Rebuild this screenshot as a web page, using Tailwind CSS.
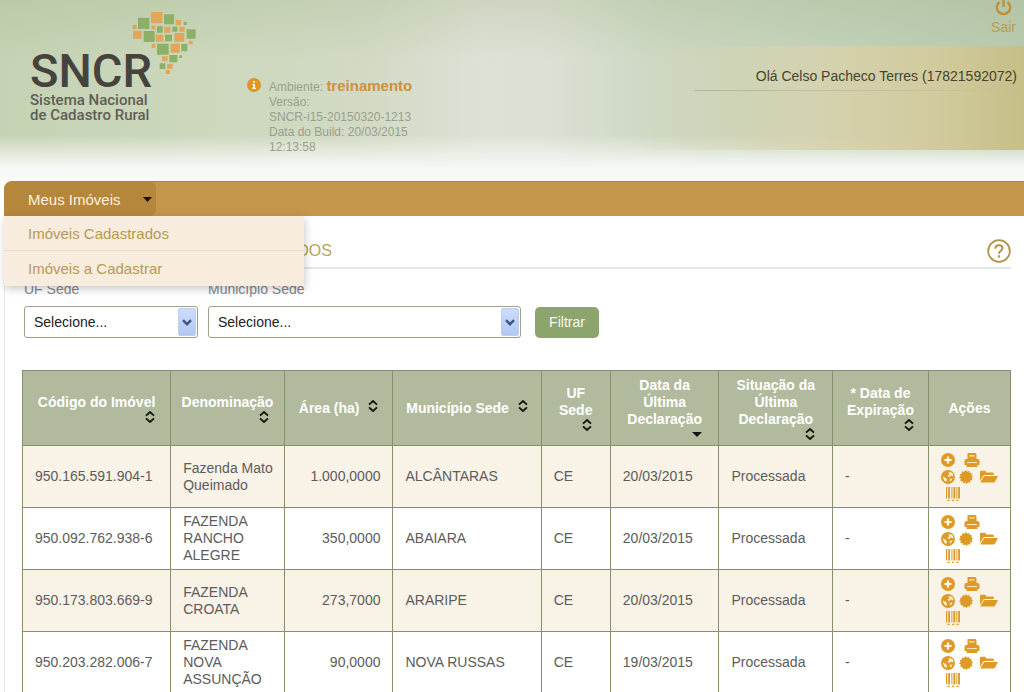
<!DOCTYPE html>
<html lang="pt-BR">
<head>
<meta charset="utf-8">
<title>SNCR - Sistema Nacional de Cadastro Rural</title>
<script src="https://cdn.jsdelivr.net/npm/@tailwindcss/browser@4"></script>
</head>
<body class="bg-white text-[14px] leading-[17px] text-[#5c5c5c] font-['Liberation_Sans',Arial,sans-serif] overflow-x-hidden">

<!-- Icon library -->
<svg class="hidden" aria-hidden="true">
  <symbol id="sort" viewBox="0 0 10 12"><path d="M1 4.6 5 1l4 3.6M1 7.4 5 11l4-3.6" fill="none" stroke="#14160f" stroke-width="1.9"/></symbol>
  <symbol id="plus" viewBox="0 0 14 14"><circle cx="7" cy="7" r="7" fill="currentColor"/><path d="M7 3.4v7.2M3.4 7h7.2" stroke="#fdf6e8" stroke-width="2.2"/></symbol>
  <symbol id="print" viewBox="0 0 16 14"><path d="M3.500 0h8L12.500 1.500V6h1q2 0 2 2v4H.5V8q0-2 2-2h1z" fill="currentColor"/><path d="M5.200 2.200h5.400v1.300H5.200zM3 9h10v1.200H3z" fill="#fbe6bd"/><path d="M2.600 10.200h10.800V14H2.600z" fill="currentColor"/></symbol>
  <symbol id="globe" viewBox="0 0 14 14"><circle cx="7" cy="7" r="7" fill="currentColor"/><path d="M7.500 1.800 11.600 3l1 3.500-2.800-.9-1.700 1.700L6.400 5.700l1.900-1.500zM1.700 6.600l2.600.8 1.900 2-1 2.700-2-1.700zM9.200 8.800l2.400-.2-1.700 2.700-1.500-.9z" fill="#fbedcf"/></symbol>
  <symbol id="badge" viewBox="0 0 14 14"><path d="M7 0l1.200 1.700L10 .8l.5 2 2.200.2-.3 2.100 1.600 1.300L12.700 8l.8 2-2.100.5-.4 2.200-2-.4L7.500 14 6.200 12.400l-2 .8-.6-2-2.200-.3.400-2.100L0 7.500l1.500-1.400L.8 4l2.100-.5.4-2.200 2 .4z" fill="currentColor"/></symbol>
  <symbol id="folder" viewBox="0 0 18 14"><path d="M0 11V2Q0 .8 1.200.8h3.600Q6 .8 6 2v.6h6.600q1.200 0 1.200 1.200V5H4.900Q3.700 5 3 6z" fill="currentColor"/><path d="M4.900 6H17.200q.9 0 .5.800l-2.600 4.800q-.5.900-1.500.9H1.200q-1 0-.5-.8L3.500 6.900Q4 6 4.900 6z" fill="currentColor"/></symbol>
  <symbol id="barcode" viewBox="0 0 14 14"><path d="M0 0h1.200v11.500H0zM2.200 0h1.800v11.500H2.200zM5.400 0h1v11.500h-1zM7.400 0h1.900v11.500H7.400zM10.400 0h1v11.500h-1zM12.200 0H14v11.500h-1.800zM1.500 12.800h2.200V14H1.500zM6 12.800h2.200V14H6zM10.500 12.800h2.200V14h-2.200z" fill="currentColor"/></symbol>
  <symbol id="chevron" viewBox="0 0 10 7"><path d="M1 1.200 5 5.200l4-4" fill="none" stroke="#3d5684" stroke-width="2.400"/></symbol>
</svg>

<header class="h-[181px] bg-[linear-gradient(to_bottom,rgba(160,178,135,0.25),rgba(205,217,190,0)_60px,rgba(247,249,245,0)_135px,#f4f6f2_165px,#fafbf9),linear-gradient(to_right,#c5d2b3,#cdd8bd_22%,#d2dac5_36%,#dde2d5_47%,#dce1d4_53%,#cdd8c4_64%,#c1d1b7_84%,#b9cab0)]">
  <div class="h-full flex items-start">
    <div class="relative ml-[30px] pt-[47px] w-[217px] shrink-0 text-[#5f5e55] font-[Roboto,sans-serif]">
      <div class="text-[47px] leading-[48px] font-medium text-[#46433f]">SNCR</div>
      <div class="-mt-[2px] text-[15px] leading-[15px] font-medium">
        <div class="h-[15px]">Sistema Nacional</div>
        <div class="h-[15px]">de Cadastro Rural</div>
      </div>
      <svg class="absolute left-[101px] top-[10px] w-[67px] h-[65px]" viewBox="395 30 201 195" aria-hidden="true">
        <g fill="#8cb166"><path d="M416 53h34v34h-34zM494 43h30v30h-30zM553 66h9v9h-9zM433 93h33v33h-33zM473 79h17v19h-17zM519 80h15v15h-15zM562 88h27v28h-27zM497 104h21v20h-21zM473 131h35v33h-35zM546 132h18v22h-18zM510 165h24v22h-24zM481 190h17v17h-17zM540 166h8v8h-8z"/></g>
        <g fill="#e2a658"><path d="M455 36h34v34h-34zM529 60h16v16h-16zM400 75h12v12h-12zM401 92h26v24h-26zM457 77h11v11h-11zM495 80h18v18h-18zM540 80h16v15h-16zM469 104h23v21h-23zM525 99h30v26h-30zM568 122h12v11h-12zM457 131h11v13h-11zM514 131h27v27h-27zM488 169h17v15h-17zM503 191h17v15h-17zM499 210h13v12h-13z"/></g>
      </svg>
    </div>
    <div class="flex gap-2 pt-[78px] w-[180px] shrink-0 text-[12px] leading-[15px] text-[#9a9e8f]">
      <svg class="w-[14px] h-[14px] shrink-0" viewBox="0 0 14 14" aria-hidden="true"><circle cx="7" cy="7" r="7" fill="#e2951f"/><path d="M6 3h2v1.800H6zM5.200 6H8v3.800h1V11H5V9.800h1V7H5.200z" fill="#fff6df"/></svg>
      <div class="whitespace-nowrap">Ambiente: <b class="text-[15px] text-[#cf9040]">treinamento</b><br>Versão:<br>SNCR-i15-20150320-1213<br>Data do Build: 20/03/2015<br>12:13:58</div>
    </div>
    <div class="flex-1 h-full flex flex-col items-end">
      <a href="#" class="h-[46px] pr-[8px] flex flex-col items-center text-[14px] leading-[16px] text-[#c49a4a]">
        <svg class="w-[17px] h-[19px]" viewBox="0 0 17 19" aria-hidden="true"><path d="M4.500 2a6.700 6.700 0 1 0 8 0M8.500-1v8" fill="none" stroke="#c08f35" stroke-width="2.400"/></svg>
        Sair
      </a>
      <div class="w-full h-[104px] pt-[22px] pr-[7px] flex flex-col items-end bg-[linear-gradient(to_right,rgba(217,213,180,0)_35%,rgba(215,211,175,0.85)_64%,#d2cb9f_84%,#c6bf88)]">
        <span class="text-[#45442f]">Olá Celso Pacheco Terres (17821592072)</span>
        <div class="mt-[5px] w-[323px] h-px bg-linear-to-r from-[#b4b59c] to-[#b4b59c]/20"></div>
      </div>
    </div>
  </div>
</header>

<nav class="relative z-10 ml-1 h-[35px] bg-[#c3964b] border-t border-[#ab8443] rounded-tl-lg">
  <button type="button" class="h-[34px] w-[152px] pl-6 pr-1 flex items-center justify-between rounded-tl-lg rounded-r-md bg-[#b5873c] text-[15px] text-[#fbf1dc]">
    Meus Imóveis
    <svg class="w-[9px] h-[5px]" viewBox="0 0 9 5" aria-hidden="true"><path d="M0 0h9L4.500 5z" fill="#161006"/></svg>
  </button>
  <div class="absolute left-0 top-[34px] w-[300px] bg-[#f8ecde] text-[15px] text-[#b59a52] shadow-[1px_3px_8px_rgba(0,0,0,0.22)]">
    <a href="#" class="flex items-center h-[35px] pl-6 border-b border-[#eadbc6]">Imóveis Cadastrados</a>
    <a href="#" class="flex items-center h-[35px] pl-6">Imóveis a Cadastrar</a>
  </div>
</nav>

<main class="ml-1 pl-[17px] pr-[13px] border-l border-[#e6e6e6]">
  <div class="ml-[2px] h-[53px] pt-[18px] flex items-center justify-between border-b-2 border-[#e6e6e6]">
    <h1 class="text-[16px] text-[#b8a45a]">CONSULTA DE IMÓVEIS CADASTRADOS</h1>
    <button type="button" aria-label="Ajuda"><svg class="w-[24px] h-[24px]" viewBox="0 0 24 24"><circle cx="12" cy="12" r="10.800" fill="none" stroke="#ae9447" stroke-width="1.800"/><path d="M8.300 9.600Q8.500 6.300 12 6.300q3.500 0 3.500 3 0 1.700-2 2.800-1.500.9-1.500 2.600M12 16.300v2.200" fill="none" stroke="#ae9447" stroke-width="2"/></svg></button>
  </div>

  <form class="ml-[2px] pt-3 flex items-end gap-[10px]">
    <div class="flex flex-col gap-2">
      <label for="uf" class="text-[#85858d]">UF Sede</label>
      <div class="relative">
        <select id="uf" class="appearance-none w-[174px] h-[32px] pl-[9px] rounded-[3px] border border-[#9ea08a] bg-white text-[#222]"><option>Selecione...</option></select>
        <span class="absolute right-[2px] top-[2px] w-[18px] h-[28px] rounded-[2px] bg-linear-to-b from-[#cddcfb] to-[#b1c8f5] border border-[#bccdf0] flex items-center justify-center pointer-events-none"><svg class="w-[10px] h-[7px]"><use href="#chevron"/></svg></span>
      </div>
    </div>
    <div class="flex flex-col gap-2">
      <label for="municipio" class="text-[#85858d]">Município Sede</label>
      <div class="relative">
        <select id="municipio" class="appearance-none w-[313px] h-[32px] pl-[9px] rounded-[3px] border border-[#9ea08a] bg-white text-[#222]"><option>Selecione...</option></select>
        <span class="absolute right-[2px] top-[2px] w-[18px] h-[28px] rounded-[2px] bg-linear-to-b from-[#cddcfb] to-[#b1c8f5] border border-[#bccdf0] flex items-center justify-center pointer-events-none"><svg class="w-[10px] h-[7px]"><use href="#chevron"/></svg></span>
      </div>
    </div>
    <button type="submit" class="ml-1 w-[64px] h-[31px] rounded-[5px] bg-[#8ba56d] text-[#f6f9f1]">Filtrar</button>
  </form>

  <table class="mt-8 w-full table-fixed border-collapse [&_th]:border [&_td]:border [&_th]:border-[#84916a] [&_td]:border-[#84916a] [&_td]:pl-3 [&_td]:pr-1 [&_td]:h-[62px]">
    <colgroup>
      <col class="w-[15%]"><col class="w-[11.5%]"><col class="w-[11%]"><col class="w-[15%]"><col class="w-[7%]"><col class="w-[11%]"><col class="w-[11.500%]"><col class="w-[9.700%]"><col>
    </colgroup>
    <thead class="bg-[#b2ba9d] text-white">
      <tr class="h-[75px]">
        <th class="p-0"><div class="inline-flex flex-col items-end">Código do Imóvel<svg class="w-[10px] h-[12px]"><use href="#sort"/></svg></div></th>
        <th class="p-0"><div class="inline-flex flex-col items-end">Denominação<svg class="w-[10px] h-[12px] mr-1"><use href="#sort"/></svg></div></th>
        <th class="p-0"><div class="inline-flex gap-[9px]">Área (ha)<svg class="w-[10px] h-[12px]"><use href="#sort"/></svg></div></th>
        <th class="p-0"><div class="inline-flex gap-[9px]">Município Sede<svg class="w-[10px] h-[12px]"><use href="#sort"/></svg></div></th>
        <th class="p-0"><div class="inline-flex flex-col items-end"><span>UF<br>Sede</span><svg class="w-[10px] h-[12px]"><use href="#sort"/></svg></div></th>
        <th class="p-0"><div class="inline-flex flex-col items-end"><span>Data da<br>Última<br>Declaração</span><svg class="w-[10px] h-[12px]" viewBox="0 0 10 12"><path d="M0 4h10L5 9z" fill="#14160f"/></svg></div></th>
        <th class="p-0"><div class="inline-flex flex-col items-end"><span>Situação da<br>Última<br>Declaração</span><svg class="w-[10px] h-[12px]"><use href="#sort"/></svg></div></th>
        <th class="p-0"><div class="inline-flex flex-col items-end"><span>* Data de<br>Expiração</span><svg class="w-[10px] h-[12px]"><use href="#sort"/></svg></div></th>
        <th class="p-0">Ações</th>
      </tr>
    </thead>
    <tbody id="rows"></tbody>
  </table>
</main>

<template id="actions">
  <div class="flex flex-col gap-[3px] text-[#de9a26]">
    <div class="flex gap-[9px]">
      <button type="button" aria-label="Adicionar"><svg class="block w-[14px] h-[14px]"><use href="#plus"/></svg></button>
      <button type="button" aria-label="Imprimir"><svg class="block w-[16px] h-[14px]"><use href="#print"/></svg></button>
    </div>
    <div class="flex">
      <button type="button" aria-label="Mapa"><svg class="block w-[14px] h-[14px]"><use href="#globe"/></svg></button>
      <button type="button" class="ml-1" aria-label="Certificado"><svg class="block w-[14px] h-[14px]"><use href="#badge"/></svg></button>
      <button type="button" class="ml-[7px]" aria-label="Documentos"><svg class="block w-[18px] h-[14px]"><use href="#folder"/></svg></button>
    </div>
    <button type="button" class="self-start ml-[5px]" aria-label="Código de barras"><svg class="block w-[14px] h-[14px]"><use href="#barcode"/></svg></button>
  </div>
</template>

<script>
  const rows = [
    ['950.165.591.904-1', 'Fazenda Mato Queimado', '1.000,0000', 'ALCÂNTARAS', 'CE', '20/03/2015', 'Processada', '-'],
    ['950.092.762.938-6', 'FAZENDA RANCHO ALEGRE', '350,0000', 'ABAIARA', 'CE', '20/03/2015', 'Processada', '-'],
    ['950.173.803.669-9', 'FAZENDA CROATA', '273,7000', 'ARARIPE', 'CE', '20/03/2015', 'Processada', '-'],
    ['950.203.282.006-7', 'FAZENDA NOVA ASSUNÇÃO', '90,0000', 'NOVA RUSSAS', 'CE', '19/03/2015', 'Processada', '-']
  ];
  const body = document.getElementById('rows');
  for (const row of rows) {
    const tr = body.insertRow();
    tr.className = 'odd:bg-[#f8f2e7] even:bg-white';
    row.forEach((value, i) => {
      const td = tr.insertCell();
      const text = document.createElement('div');
      text.textContent = value;
      if (i === 2) text.className = 'text-right pr-2';
      td.append(text);
    });
    tr.insertCell().append(document.getElementById('actions').content.cloneNode(true));
  }
</script>
</body>
</html>
